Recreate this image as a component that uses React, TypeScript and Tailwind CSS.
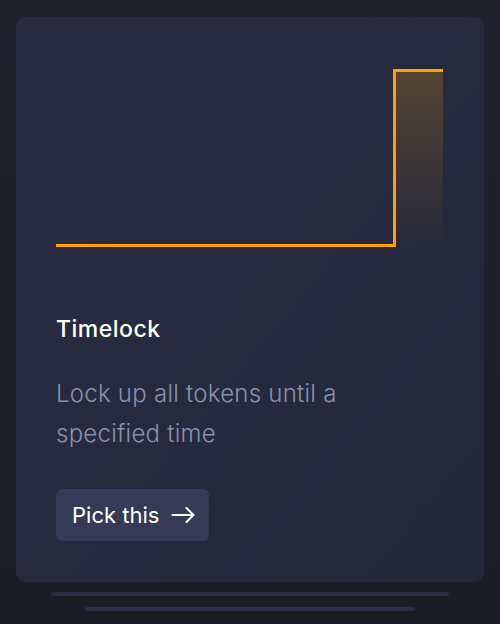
// Step chart shown at the top of the option card
function TimelockChart() {
  return (
    <svg width="387" height="182" viewBox="0 0 387 182" className="block">
      <defs>
        <linearGradient id="fillGrad" x1="0" y1="0" x2="0" y2="1">
          <stop offset="0%" stopColor="#f59e0b" stopOpacity="0.22" />
          <stop offset="100%" stopColor="#f59e0b" stopOpacity="0" />
        </linearGradient>
      </defs>
      <rect x="339" y="3" width="48" height="176" fill="url(#fillGrad)" />
      <polyline
        points="0,178.5 338.5,178.5 338.5,3.5 387,3.5"
        fill="none"
        stroke="#ffa000"
        strokeWidth="3"
      />
    </svg>
  );
}

function Arrow() {
  return (
    <svg width="24" height="16" viewBox="0 0 24 16" fill="none" stroke="currentColor" strokeWidth="2" strokeLinecap="round" strokeLinejoin="round">
      <path d="M1.5 8H22.5M15.5 1L22.5 8L15.5 15" />
    </svg>
  );
}

export default function App() {
  return (
    <div
      className="w-[500px] h-[624px] overflow-hidden bg-gradient-to-b from-[#20222f] to-[#1b1c26] px-4 pt-[17px]"
      style={{ fontFamily: 'Inter, "Open Sans", sans-serif' }}
    >
      {/* Card */}
      <div className="h-[565px] rounded-[10px] bg-gradient-to-br from-[#2a2d42] to-[#24273a] px-10 pt-[50px]">
        <TimelockChart />

        <h3 className="mt-[65px] text-[23px] leading-[30px] font-medium tracking-[0.5px] text-white">Timelock</h3>

        <p className="mt-[30px] w-[330px] text-[24px] leading-[40px] font-light tracking-[0.25px] text-[#8a91ac]">
          Lock up all tokens until a specified time
        </p>

        <button className="mt-[35px] flex h-[52px] items-center gap-3 rounded-md bg-[#363a55] pl-4 pr-[14px] text-[22px] font-normal text-white">
          Pick this
          <Arrow />
        </button>
      </div>

      {/* Stacked cards behind */}
      <div className="mx-[35px] mt-[10px] h-[4px] rounded-full bg-[#2b2f45]" />
      <div className="mx-[69px] mt-[11px] h-[4px] rounded-full bg-[#2b2f45]" />
    </div>
  );
}
